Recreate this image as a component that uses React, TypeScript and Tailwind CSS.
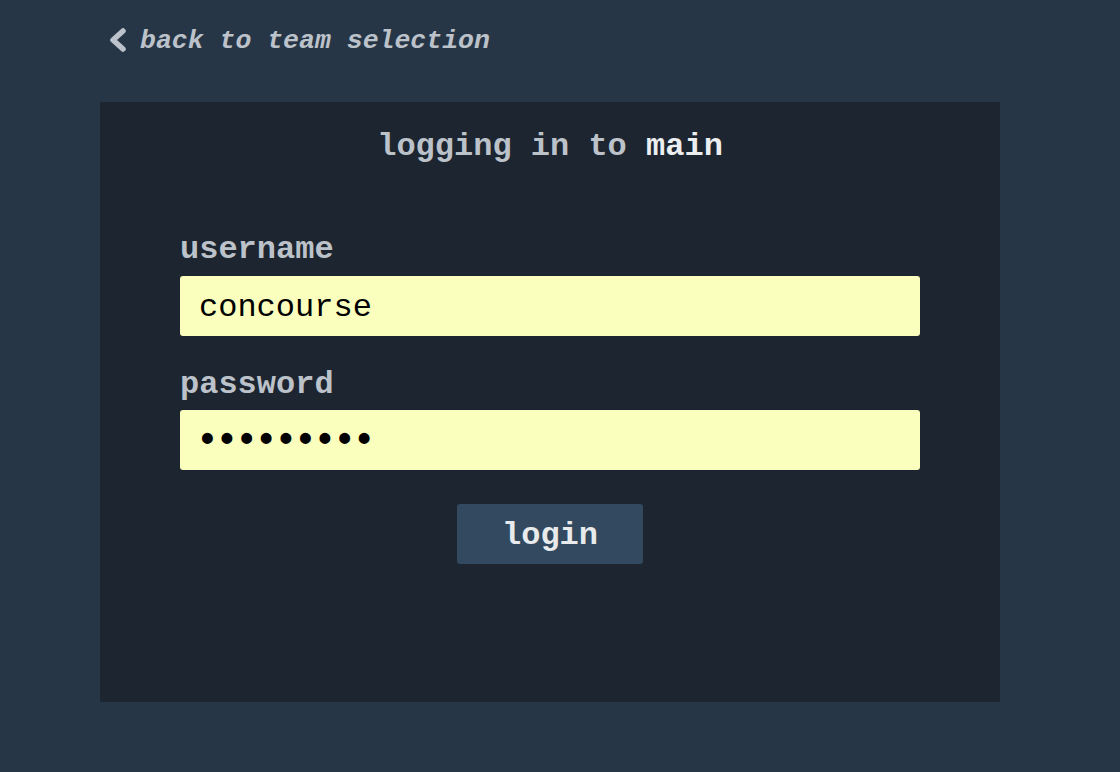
import { useState } from 'react';

const mono = { fontFamily: '"Liberation Mono", "Courier New", monospace' };

function ChevronLeft() {
  return (
    <svg width="18" height="28" viewBox="0 0 18 28" className="shrink-0">
      <polyline
        points="15,5 5,14 15,23"
        fill="none"
        stroke="#bcc2c9"
        strokeWidth="5.5"
        strokeLinecap="round"
        strokeLinejoin="round"
      />
    </svg>
  );
}

export default function App() {
  const [username, setUsername] = useState('concourse');
  const [password, setPassword] = useState('123456789');

  return (
    <div className="min-h-[772px] w-full bg-[#273647] pt-5" style={mono}>
      <div className="ml-[100px] w-[900px]">
        <a href="#" className="flex h-10 items-center gap-[14px] pl-2 font-bold italic text-[26.5px] leading-10 text-[#bcc2c9]">
          <ChevronLeft />
          <span className="pt-[2px]">back to team selection</span>
        </a>

        <div className="mt-[42px] flex h-[600px] flex-col items-center bg-[#1c2530] pt-[23px]">
          <h1 className="h-10 pt-1 text-[32px] font-bold leading-9 text-[#bcc2c9]">
            logging in to <span className="text-[#eceef0]">main</span>
          </h1>

          <form className="mt-[63px] flex w-[740px] flex-col" onSubmit={(e) => e.preventDefault()}>
            <label className="h-10 pt-1 text-[32px] font-bold leading-9 text-[#bcc2c9]">username</label>
            <input
              type="text"
              value={username}
              onChange={(e) => setUsername(e.target.value)}
              className="mt-2 h-[60px] w-full rounded-[3px] bg-[#fbffbd] pl-[19px] pt-[2px] text-[32px] text-black outline-none"
            />
            <label className="mt-[27px] h-10 pt-1 text-[32px] font-bold leading-9 text-[#bcc2c9]">password</label>
            <input
              type="password"
              value={password}
              onChange={(e) => setPassword(e.target.value)}
              className="mt-[7px] h-[60px] w-full rounded-[3px] bg-[#fbffbd] pl-[16px] text-[38px] font-bold tracking-[-3.2px] text-black outline-none"
            />
            <div className="mt-[34px] flex justify-center">
              <button
                type="submit"
                className="h-[60px] w-[186px] rounded-[3px] bg-[#32495f] pt-1 text-[32px] font-bold text-[#e8eaec]"
              >
                login
              </button>
            </div>
          </form>
        </div>
      </div>
    </div>
  );
}
